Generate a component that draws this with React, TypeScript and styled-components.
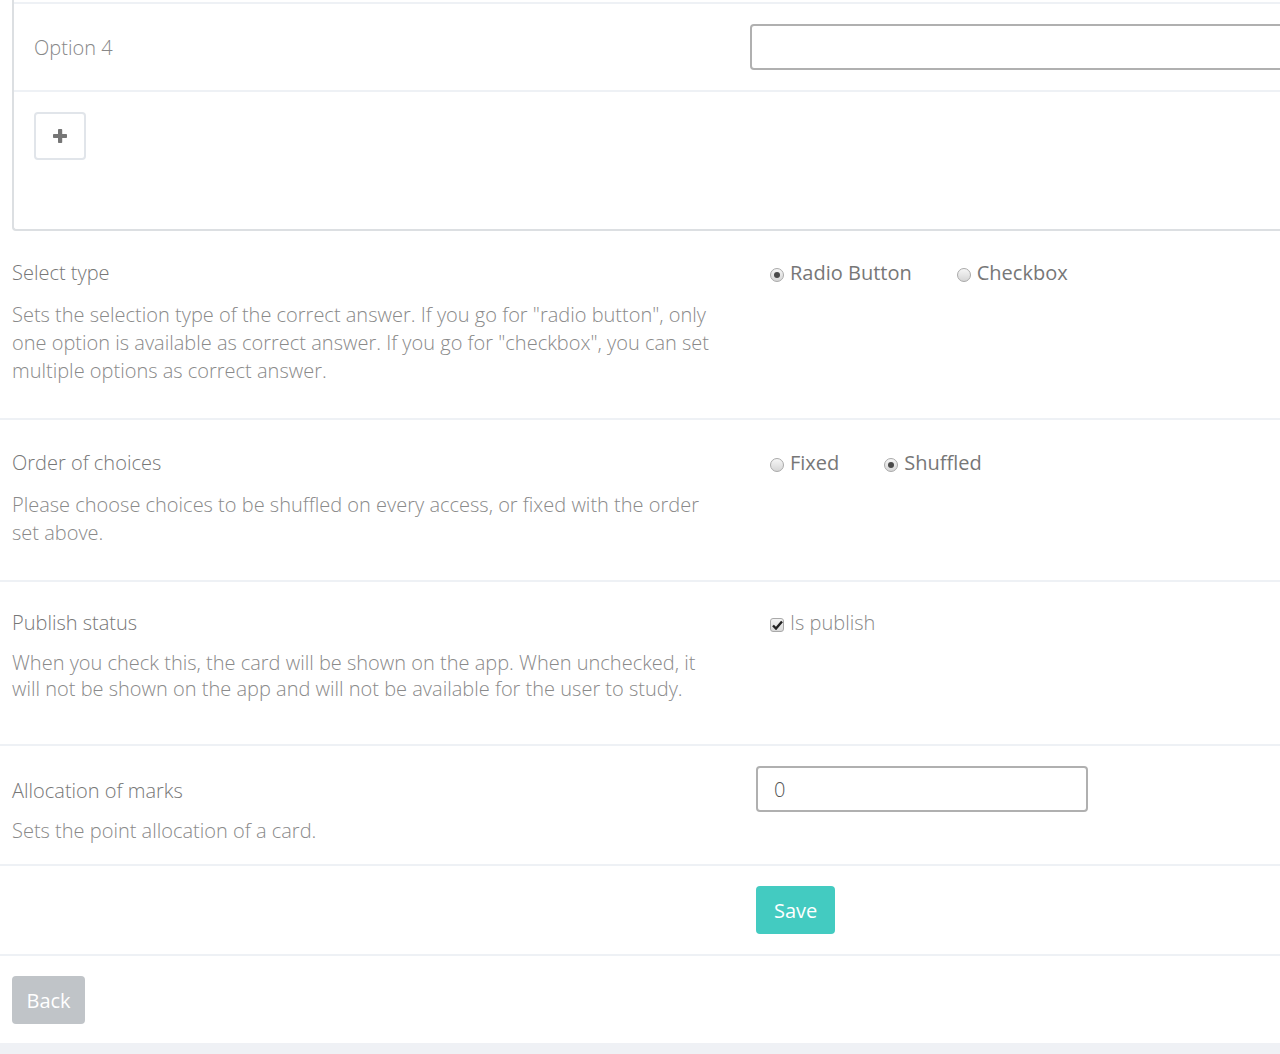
import { createGlobalStyle, styled } from "styled-components";

const GlobalStyle = createGlobalStyle`
  html, body {
    margin: 0;
    padding: 0;
    background: #fff;
    font-family: "Open Sans", "Liberation Sans", sans-serif;
    overflow: hidden;
  }
`;

const Page = styled.div`
  width: 1280px;
  height: 1054px;
  overflow: hidden;
  background: #fff;
  display: flex;
  flex-direction: column;
`;

const Panel = styled.div`
  margin-left: 12px;
  width: 1300px;
  padding-top: 2px;
  border-left: 2px solid #dcdfe2;
  border-bottom: 2px solid #dcdfe2;
  border-bottom-left-radius: 4px;
`;

const OptionRow = styled.div`
  display: grid;
  grid-template-columns: 736px 1fr;
  align-items: center;
  height: 86px;
  border-top: 2px solid #eef1f5;
  border-bottom: 2px solid #eef1f5;
`;

const OptionName = styled.div`
  padding-left: 20px;
  font-size: 20px;
  font-weight: 300;
  color: #888;
`;

const WideInput = styled.input`
  box-sizing: border-box;
  width: 560px;
  height: 46px;
  border: 2px solid #b0b0b0;
  border-radius: 4px;
  outline: none;
`;

const AddArea = styled.div`
  padding: 20px 20px 69px;
`;

const IconButton = styled.button`
  box-sizing: border-box;
  width: 52px;
  height: 48px;
  display: flex;
  align-items: center;
  justify-content: center;
  background: #fff;
  border: 2px solid #e1e5ea;
  border-radius: 4px;
  padding: 0;
`;

const Section = styled.div<{ $top: number; $bottom: number }>`
  display: grid;
  grid-template-columns: 744px 1fr;
  padding: ${(p) => p.$top}px 0 ${(p) => p.$bottom}px 12px;
  border-bottom: 2px solid #eef1f5;
`;

const Info = styled.div`
  display: flex;
  flex-direction: column;
`;

const Label = styled.div`
  font-size: 20px;
  line-height: 28px;
  font-weight: 300;
  color: #777;
`;

const Description = styled.p<{ $lh: number; $gap: number }>`
  margin: ${(p) => p.$gap}px 0 0;
  width: 712px;
  font-size: 20px;
  line-height: ${(p) => p.$lh}px;
  font-weight: 300;
  color: #8a8a8a;
`;

const Choices = styled.div<{ $indent: number }>`
  display: flex;
  align-items: center;
  gap: 45px;
  height: 28px;
  padding-left: ${(p) => p.$indent}px;
`;

const Choice = styled.label`
  display: flex;
  align-items: center;
  gap: 6px;
  font-size: 20px;
  line-height: 26px;
  color: #777;
`;

const ChoiceText = styled.span<{ $light?: boolean }>`
  font-weight: ${(p) => (p.$light ? 300 : 400)};
  color: ${(p) => (p.$light ? "#888" : "#777")};
`;

const Radio = styled.span<{ $on?: boolean }>`
  position: relative;
  box-sizing: border-box;
  width: 14px;
  height: 14px;
  margin-top: 3px;
  border-radius: 50%;
  border: 1px solid #a9a9a9;
  background: linear-gradient(#f6f6f6, #d6d6d6);
  &::after {
    content: "";
    display: ${(p) => (p.$on ? "block" : "none")};
    position: absolute;
    left: 3px;
    top: 3px;
    width: 6px;
    height: 6px;
    border-radius: 50%;
    background: #4a4a4a;
  }
`;

const Check = styled.span`
  box-sizing: border-box;
  width: 14px;
  height: 14px;
  margin-top: 3px;
  border-radius: 3px;
  border: 1px solid #a9a9a9;
  background: linear-gradient(#f4f4f4, #d9d9d9);
  display: flex;
  align-items: center;
  justify-content: center;
`;

const MarksInput = styled.input`
  box-sizing: border-box;
  width: 332px;
  height: 46px;
  margin-top: -11px;
  padding: 0 16px;
  border: 2px solid #b0b0b0;
  border-radius: 4px;
  font-family: "Open Sans", sans-serif;
  font-size: 20px;
  font-weight: 300;
  color: #555;
  outline: none;
`;

const ActionRow = styled.div<{ $indent: number; $bottom: number; $line?: boolean }>`
  padding: 20px 0 ${(p) => p.$bottom}px ${(p) => p.$indent}px;
  border-bottom: ${(p) => (p.$line ? "2px solid #eef1f5" : "none")};
`;

const Button = styled.button<{ $tone: "save" | "back" }>`
  height: 48px;
  padding: 0 ${(p) => (p.$tone === "save" ? 18 : 14.5)}px;
  border: none;
  border-radius: 4px;
  background: ${(p) => (p.$tone === "save" ? "#43cbc1" : "#c0c4c8")};
  color: #fff;
  font-family: "Open Sans", sans-serif;
  font-size: 20px;
`;

const Footer = styled.div`
  flex: 1;
  background: #eff1f5;
`;

function PlusIcon() {
  return (
    <svg width="16" height="16" viewBox="0 0 16 16">
      <rect x="6" y="1" width="4.2" height="14" rx="0.8" fill="#767676" />
      <rect x="1" y="5.9" width="14" height="4.2" rx="0.8" fill="#767676" />
    </svg>
  );
}

function CheckMark() {
  return (
    <svg width="11" height="10" viewBox="0 0 11 10">
      <path d="M1 5.5 L4 8.5 L10 1.5" fill="none" stroke="#222" strokeWidth="2.4" />
    </svg>
  );
}

export default function App() {
  return (
    <Page>
      <GlobalStyle />
      <Panel>
        <OptionRow>
          <OptionName>Option 4</OptionName>
          <WideInput />
        </OptionRow>
        <AddArea>
          <IconButton>
            <PlusIcon />
          </IconButton>
        </AddArea>
      </Panel>

      <Section $top={28} $bottom={33}>
        <Info>
          <Label>Select type</Label>
          <Description $lh={28} $gap={14}>
            Sets the selection type of the correct answer. If you go for "radio button", only
            one option is available as correct answer. If you go for "checkbox", you can set
            multiple options as correct answer.
          </Description>
        </Info>
        <Choices $indent={14}>
          <Choice>
            <Radio $on />
            <ChoiceText>Radio Button</ChoiceText>
          </Choice>
          <Choice>
            <Radio />
            <ChoiceText>Checkbox</ChoiceText>
          </Choice>
        </Choices>
      </Section>

      <Section $top={29} $bottom={33}>
        <Info>
          <Label>Order of choices</Label>
          <Description $lh={28} $gap={14}>
            Please choose choices to be shuffled on every access, or fixed with the order
            set above.
          </Description>
        </Info>
        <Choices $indent={14}>
          <Choice>
            <Radio />
            <ChoiceText>Fixed</ChoiceText>
          </Choice>
          <Choice>
            <Radio $on />
            <ChoiceText>Shuffled</ChoiceText>
          </Choice>
        </Choices>
      </Section>

      <Section $top={27} $bottom={42}>
        <Info>
          <Label>Publish status</Label>
          <Description $lh={26} $gap={13}>
            When you check this, the card will be shown on the app. When unchecked, it
            will not be shown on the app and will not be available for the user to study.
          </Description>
        </Info>
        <Choices $indent={14}>
          <Choice>
            <Check>
              <CheckMark />
            </Check>
            <ChoiceText $light>Is publish</ChoiceText>
          </Choice>
        </Choices>
      </Section>

      <Section $top={31} $bottom={19}>
        <Info>
          <Label>Allocation of marks</Label>
          <Description $lh={28} $gap={12}>
            Sets the point allocation of a card.
          </Description>
        </Info>
        <div>
          <MarksInput defaultValue="0" />
        </div>
      </Section>

      <ActionRow $indent={756} $bottom={20} $line>
        <Button $tone="save">Save</Button>
      </ActionRow>
      <ActionRow $indent={12} $bottom={19}>
        <Button $tone="back">Back</Button>
      </ActionRow>
      <Footer />
    </Page>
  );
}
